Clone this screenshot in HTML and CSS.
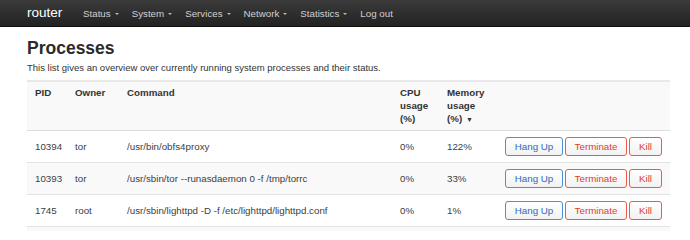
FILE: index.html
```html
<!DOCTYPE html>
<html>
<head>
<meta charset="utf-8">
<link rel="stylesheet" href="styles.css">
</head>
<body>
<header class="navbar">
  <span class="brand">router</span>
  <nav class="menu">
    <span class="item">Status<i class="caret"></i></span>
    <span class="item">System<i class="caret"></i></span>
    <span class="item">Services<i class="caret"></i></span>
    <span class="item">Network<i class="caret"></i></span>
    <span class="item">Statistics<i class="caret"></i></span>
    <span class="item">Log out</span>
  </nav>
</header>
<main class="content">
  <h2 class="title">Processes</h2>
  <p class="desc">This list gives an overview over currently running system processes and their status.</p>
  <table class="proc">
    <colgroup>
      <col class="c-pid"><col class="c-owner"><col class="c-cmd"><col class="c-cpu"><col class="c-mem"><col class="c-act">
    </colgroup>
    <thead>
      <tr>
        <th>PID</th>
        <th>Owner</th>
        <th>Command</th>
        <th>CPU<br>usage<br>(%)</th>
        <th>Memory<br>usage<br>(%) <span class="sort">▼</span></th>
        <th></th>
      </tr>
    </thead>
    <tbody>
      <tr>
        <td>10394</td><td>tor</td><td>/usr/bin/obfs4proxy</td><td>0%</td><td>122%</td>
        <td><div class="acts"><button class="btn blue">Hang Up</button><button class="btn red">Terminate</button><button class="btn red">Kill</button></div></td>
      </tr>
      <tr class="alt">
        <td>10393</td><td>tor</td><td>/usr/sbin/tor --runasdaemon 0 -f /tmp/torrc</td><td>0%</td><td>33%</td>
        <td><div class="acts"><button class="btn blue">Hang Up</button><button class="btn red">Terminate</button><button class="btn red">Kill</button></div></td>
      </tr>
      <tr>
        <td>1745</td><td>root</td><td>/usr/sbin/lighttpd -D -f /etc/lighttpd/lighttpd.conf</td><td>0%</td><td>1%</td>
        <td><div class="acts"><button class="btn blue">Hang Up</button><button class="btn red">Terminate</button><button class="btn red">Kill</button></div></td>
      </tr>
      <tr class="alt next"><td colspan="6"></td></tr>
    </tbody>
  </table>
</main>
</body>
</html>
```

FILE: styles.css
```css
* { box-sizing: border-box; }
html, body { margin: 0; padding: 0; background: #fff; }
body {
  font-family: "Liberation Sans", Arial, sans-serif;
  font-size: 9.5px;
  color: #404040;
}
.navbar {
  height: 27px;
  display: flex;
  align-items: center;
  padding-left: 27px;
  background: linear-gradient(#3b3b3b, #222222);
  border-bottom: 1px solid #111;
}
.brand {
  color: #fff;
  font-size: 13.5px;
  width: 56px;
  margin-top: -1px;
}
.menu {
  display: flex;
  align-items: center;
}
.item {
  color: #cfcfcf;
  font-size: 9.75px;
  margin-right: 13px;
  display: inline-flex;
  align-items: center;
}
.caret {
  display: inline-block;
  width: 0;
  height: 0;
  margin-left: 4px;
  margin-top: 2px;
  border-left: 2.5px solid transparent;
  border-right: 2.5px solid transparent;
  border-top: 2.5px solid #bbb;
}
.content {
  padding: 0 21px 0 27px;
}
.title {
  margin: 0;
  padding-top: 11px;
  font-size: 17.5px;
  font-weight: bold;
  color: #2b2b2b;
  line-height: 20px;
}
.desc {
  margin: 3px 0 0 0;
  line-height: 13px;
  color: #333;
}
.proc {
  margin-top: 6px;
  width: 643px;
  border-collapse: collapse;
  table-layout: fixed;
}
.c-pid { width: 40px; }
.c-owner { width: 52px; }
.c-cmd { width: 273px; }
.c-cpu { width: 47px; }
.c-mem { width: 58px; }
.c-act { width: 173px; }
.proc thead tr {
  background: #f9f9f9;
  border-top: 2px solid #e8e8e8;
  border-bottom: 1px solid #ddd;
}
.proc th {
  text-align: left;
  vertical-align: top;
  font-weight: bold;
  font-size: 9.75px;
  color: #333;
  padding: 4px 8px 4px 8px;
  line-height: 13px;
  height: 47px;
}
.sort { font-size: 7px; margin-left: 1px; }
.proc td {
  height: 32px;
  padding: 0 8px;
  vertical-align: middle;
  line-height: 13px;
  font-size: 9.75px;
  border-bottom: 1px solid #e2e2e2;
  white-space: nowrap;
}
.proc tr.alt td { background: #f9f9f9; }
.proc tr.next td { height: 4px; border-bottom: 0; padding: 0; }
.acts {
  display: flex;
  gap: 2px;
}
.btn {
  font-family: "Liberation Sans", Arial, sans-serif;
  font-size: 9.75px;
  height: 19px;
  padding: 0 8px;
  border-radius: 3px;
  border: 1px solid;
  background: linear-gradient(#ffffff, #f2f2f2);
  line-height: 17px;
  margin: 0;
}
.btn.blue { border-color: #4a8fd8; color: #2d6bb8; width: 58px; }
.btn.red { border-color: #ee5a4a; color: #e23c2e; }
.btn.red:nth-child(2) { width: 62px; }
.btn.red:nth-child(3) { width: 33px; }
```
